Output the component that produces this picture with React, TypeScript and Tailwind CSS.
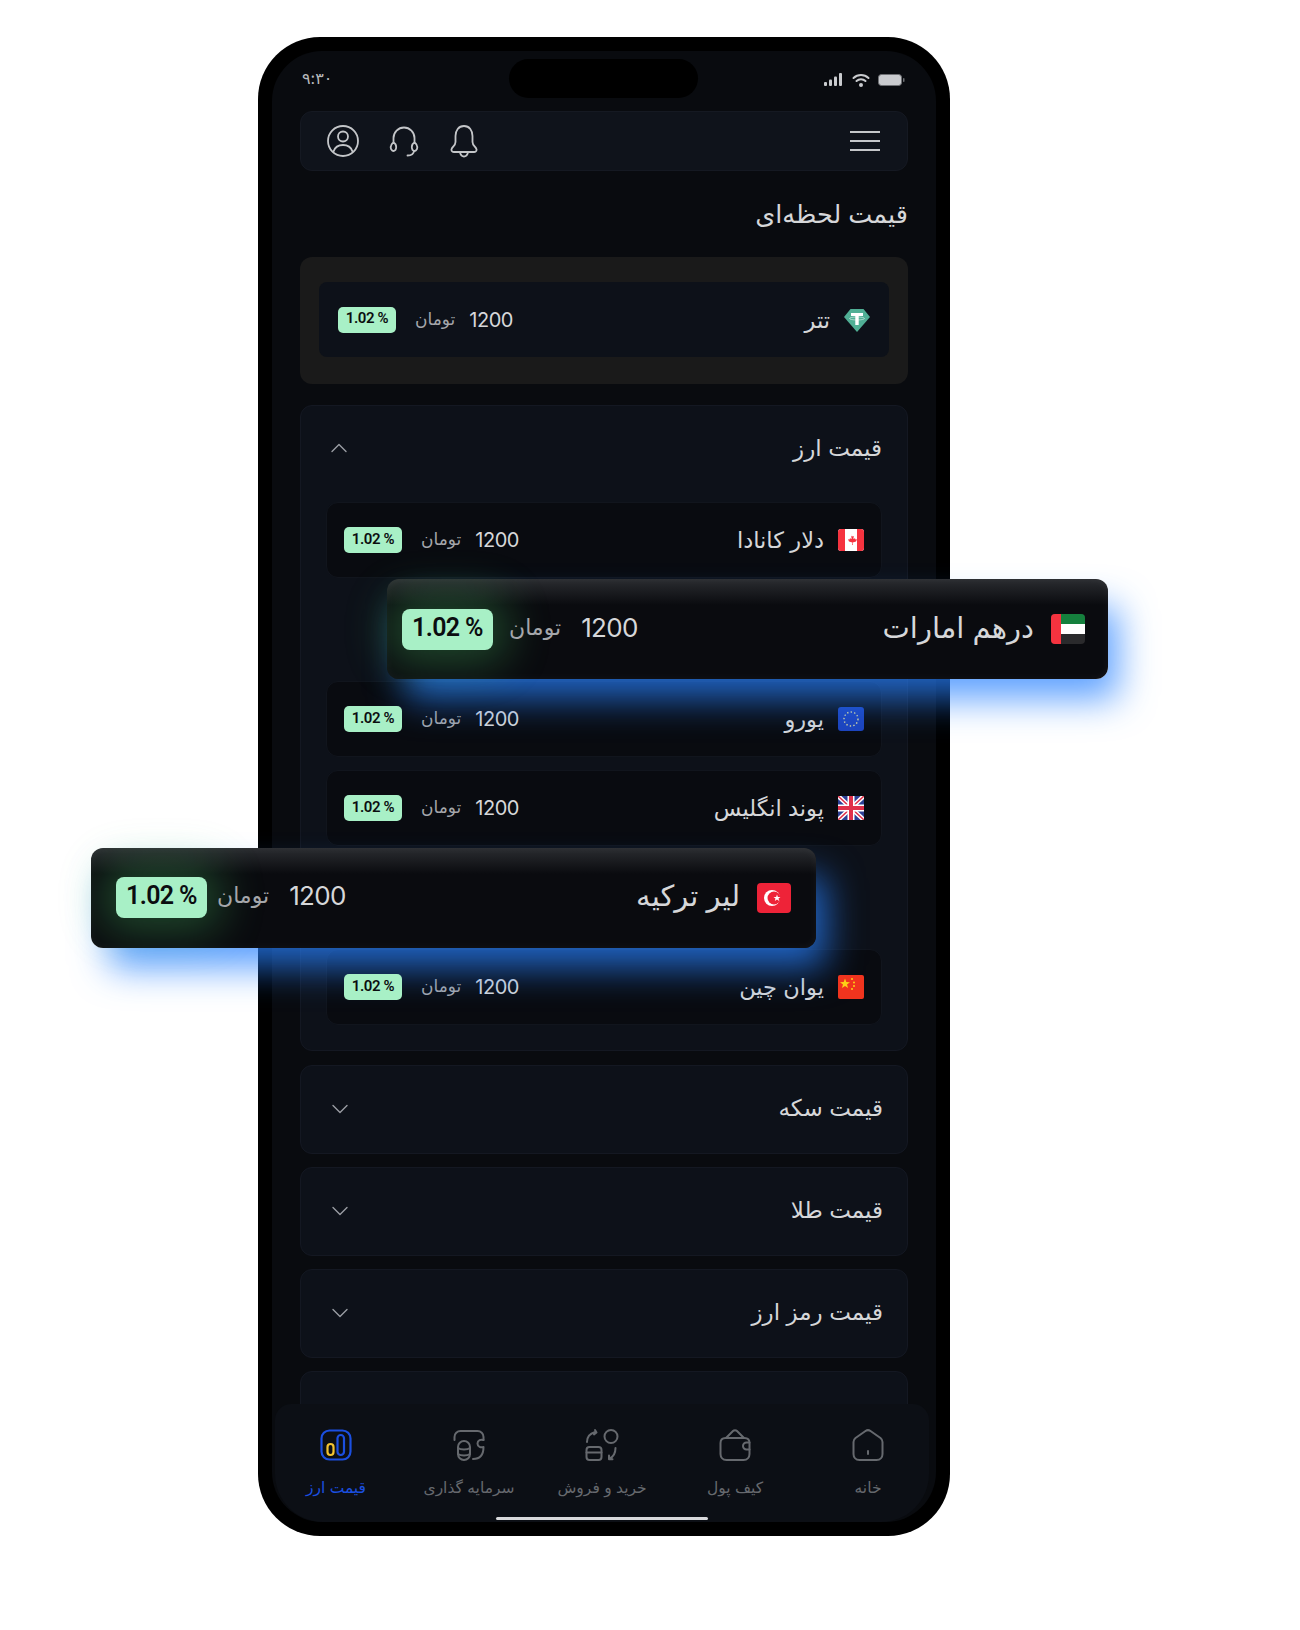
const font = { fontFamily: '"Inter", "Noto Sans", "DejaVu Sans", sans-serif' }

function Canada() {
  return (
    <svg viewBox="0 0 26 26" className="w-[26px] h-[26px]">
      <rect x="0" y="2" width="26" height="22" rx="3" fill="#fff" />
      <path d="M3 2h4v22H3a3 3 0 0 1-3-3V5a3 3 0 0 1 3-3zM19 2h4a3 3 0 0 1 3 3v16a3 3 0 0 1-3 3h-4z" fill="#f5333f" />
      <path d="M13 7l1.4 2.6 1.4-.6-.5 3 1.7-.8.5 1.2 1.5-.2-1 2.4-3.3.8.2 2.6h-.8l.2-2.6-3.3-.8-1-2.4 1.5.2.5-1.2 1.7.8-.5-3 1.4.6z" fill="#f5333f" />
    </svg>
  )
}

function Euro() {
  return (
    <svg viewBox="0 0 26 26" className="w-[26px] h-[26px]">
      <rect width="26" height="24" y="1" rx="3" fill="#1c43bd" />
      <circle cx="13" cy="13" r="7" fill="none" stroke="#d9d8a0" strokeWidth="1.4" strokeDasharray="1.4 2.2" />
    </svg>
  )
}

function Uk() {
  return (
    <svg viewBox="0 0 26 24" className="w-[26px] h-[24px]">
      <rect width="26" height="24" fill="#2c3f95" />
      <path d="M0 0l26 24M26 0L0 24" stroke="#fff" strokeWidth="4.5" />
      <path d="M0 0l26 24M26 0L0 24" stroke="#e0304a" strokeWidth="1.5" />
      <path d="M13 0v24M0 12h26" stroke="#fff" strokeWidth="7" />
      <path d="M13 0v24M0 12h26" stroke="#e0304a" strokeWidth="4" />
    </svg>
  )
}

function China() {
  return (
    <svg viewBox="0 0 26 24" className="relative z-30 w-[26px] h-[24px]">
      <rect width="26" height="24" rx="2" fill="#f0341e" />
      <path d="M7 3.5l1.3 3.6 3.7.1-3 2.3 1.1 3.600L7 11l-3.100 2.100L5 9.500 2 7.200l3.700-.1z" fill="#fcd116" />
      <circle cx="14" cy="4" r="1" fill="#fcd116" />
      <circle cx="16" cy="7.5" r="1" fill="#fcd116" />
      <circle cx="16" cy="11" r="1" fill="#fcd116" />
      <circle cx="14" cy="14" r="1" fill="#fcd116" />
    </svg>
  )
}

function Uae() {
  return (
    <svg viewBox="0 0 34 30" className="w-[34px] h-[30px]">
      <rect width="34" height="30" rx="4" fill="#2a2a2c" />
      <path d="M10 0h20a4 4 0 0 1 4 4v6H10z" fill="#15803d" />
      <rect x="10" y="10" width="24" height="10" fill="#fff" />
      <path d="M4 0h6v30H4a4 4 0 0 1-4-4V4a4 4 0 0 1 4-4z" fill="#f5333f" />
    </svg>
  )
}

function Turkey() {
  return (
    <svg viewBox="0 0 34 30" className="w-[34px] h-[30px]">
      <rect width="34" height="30" rx="4" fill="#ee2338" />
      <circle cx="15" cy="15" r="8" fill="#fff" />
      <circle cx="17" cy="15" r="6.5" fill="#ee2338" />
      <path d="M20 11.5l.9 2.5 2.6-.1-2 1.6.7 2.5-2.200-1.500-2.200 1.500.7-2.500-2-1.600 2.600.1z" fill="#fff" />
    </svg>
  )
}

function Tether() {
  return (
    <svg viewBox="0 0 26 26" className="w-[26px] h-[26px]">
      <path d="M6.5 2h13L26 10 13 25 0 10z" fill="#50af95" />
      <path d="M7 6h12v3h-4.300v9h-3.400V9H7z" fill="#fff" />
      <ellipse cx="13" cy="11.5" rx="7.5" ry="1.5" fill="none" stroke="#fff" strokeWidth="0.7" opacity="0.7" />
    </svg>
  )
}

function Chevron({ up }: { up?: boolean }) {
  return (
    <svg viewBox="0 0 18 10" className="w-[18px] h-[10px]" fill="none" stroke="#9a9da3" strokeWidth="1.4" strokeLinecap="round" strokeLinejoin="round">
      <path d={up ? "M2 8.5l7-7 7 7" : "M2 1.5l7 7 7-7"} />
    </svg>
  )
}

function Badge({ big }: { big?: boolean }) {
  if (big) {
    return (
      <div className="w-[91px] h-[41px] pb-[3px] rounded-lg bg-[#a8f0c6] text-[#0b0d10] font-['Roboto'] text-[25px] font-semibold tracking-tight flex items-center justify-center shadow-[0_0_44px_14px_rgba(80,210,110,0.3)]">
        1.02 %
      </div>
    )
  }
  return (
    <div className="relative z-30 w-[58px] h-[26px] pb-[2px] rounded-[5px] bg-[#a8f0c6] text-[#0b0d10] font-['Roboto'] text-[15px] font-semibold tracking-tight flex items-center justify-center">
      1.02 %
    </div>
  )
}

function Row({ name, flag }: { name: string; flag: React.ReactNode }) {
  return (
    <div className="h-[76px] rounded-xl bg-[#090b10] border border-[#11151d] px-[17px] flex items-center justify-between">
      <div className="flex items-center">
        <Badge />
        <span className="ml-[19px] text-[#a5a7ab] text-[17px]">تومان</span>
        <span className="ml-[14px] text-[#d6d7d9] text-[20px] tracking-tight">1200</span>
      </div>
      <div className="flex items-center gap-[14px]">
        <span className="text-[#d6d7d9] text-[22.5px]">{name}</span>
        {flag}
      </div>
    </div>
  )
}

function FloatRow({ name, flag, className, gap }: { name: string; flag: React.ReactNode; className: string; gap: string }) {
  return (
    <div className={"absolute z-20 h-[100px] rounded-xl flex items-center justify-between bg-[linear-gradient(180deg,#2a2c30_0px,#0a0b0f_26px)] shadow-[14px_24px_36px_-4px_rgba(40,130,255,0.75),inset_0_0_10px_rgba(255,255,255,0.05)] " + className}>
      <div className="flex items-center">
        <Badge big />
        <span className={"-mt-[4px] text-[#a5a7ab] text-[22px] " + gap}>تومان</span>
        <span className="-mt-[4px] ml-[20px] text-[#d6d7d9] text-[26px] tracking-tight">1200</span>
      </div>
      <div className="flex items-center gap-[17px]">
        <span className="-mt-[4px] text-[#d6d7d9] text-[29px]">{name}</span>
        {flag}
      </div>
    </div>
  )
}

function Accordion({ title }: { title: string }) {
  return (
    <div className="h-[89px] rounded-xl bg-[#0d1119] border border-[#141822] pl-[30px] pr-[24px] flex items-center justify-between">
      <Chevron />
      <span className="-mt-[2px] text-[#d6d7d9] text-[23px]">{title}</span>
    </div>
  )
}

function NavItem({ label, icon, active }: { label: string; icon: React.ReactNode; active?: boolean }) {
  return (
    <div className="w-[133px] shrink-0 flex flex-col items-center">
      <div className="h-[36px] flex items-center justify-center">{icon}</div>
      <span className={"mt-[15px] text-[15.5px] leading-[20px] " + (active ? "text-[#1b4fe0]" : "text-[#66696e]")}>{label}</span>
    </div>
  )
}

export default function App() {
  return (
    <div className="w-[1300px] h-[1630px] bg-white pt-[37px] pl-[258px]" style={font} dir="ltr">
      <div className="relative w-[692px] h-[1499px] rounded-[62px] bg-black p-[14px]">
        <div className="relative h-full rounded-[50px] bg-[#090b0f] px-[28px]">
          {/* status bar */}
          <div className="relative h-[60px] flex items-center justify-between pl-[2px] pr-[3px]">
            <span className="text-[#b8babd] text-[16px] tracking-wider -mt-[6px]">۹:۳۰</span>
            <div className="absolute left-[209px] top-[8px] w-[189px] h-[39px] rounded-[20px] bg-black" />
            <div className="flex items-center gap-[8px] -mt-[3px]">
              <svg viewBox="0 0 20 13" className="w-[20px] h-[13px]" fill="#c9cbce">
                <rect x="0" y="9" width="3" height="4" rx="1" />
                <rect x="5" y="6.5" width="3" height="6.5" rx="1" />
                <rect x="10" y="3.5" width="3" height="9.5" rx="1" />
                <rect x="15" y="0" width="3" height="13" rx="1" />
              </svg>
              <svg viewBox="0 0 18 14" className="w-[18px] h-[14px]" fill="none" stroke="#c9cbce" strokeWidth="2" strokeLinecap="round">
                <path d="M1.5 5a11 11 0 0 1 15 0" />
                <path d="M4.5 8a6.5 6.5 0 0 1 9 0" />
                <circle cx="9" cy="12" r="1" fill="#c9cbce" />
              </svg>
              <svg viewBox="0 0 27 12" className="w-[27px] h-[12px]">
                <rect x="0.5" y="0.5" width="23" height="11" rx="3" fill="#c9cbce" stroke="#6d6f73" />
                <rect x="25" y="4" width="1.5" height="4" rx="0.7" fill="#6d6f73" />
              </svg>
            </div>
          </div>

          {/* top bar */}
          <div className="h-[60px] rounded-xl bg-[#0f131b] border border-[#151922] pl-[26px] pr-[27px] flex items-center justify-between">
            <div className="flex items-center gap-[30px]">
              <svg viewBox="0 0 32 34" className="w-[32px] h-[34px]" fill="none" stroke="#c4c6c9" strokeWidth="1.8" strokeLinecap="round">
                <circle cx="16" cy="17" r="15" />
                <circle cx="16" cy="12.5" r="5" />
                <path d="M6.5 27.5c1.5-4.5 5-6.500 9.500-6.500s8 2 9.500 6.500" />
              </svg>
              <svg viewBox="0 0 30 32" className="w-[30px] h-[32px]" fill="none" stroke="#c4c6c9" strokeWidth="1.8" strokeLinecap="round">
                <path d="M4.5 18V13a10.5 10.5 0 0 1 21 0v5" />
                <path d="M4.5 17.5c2 1 3 3.5 2.5 6-.4 2.400-2.500 3-3.800 2-1.500-1.300-1.700-3.600-1-5.200.5-1.300 1.300-2.300 2.300-2.800z" />
                <path d="M25.5 17.5c-2 1-3 3.5-2.5 6 .4 2.400 2.500 3 3.800 2 1.500-1.300 1.700-3.600 1-5.200-.5-1.300-1.300-2.300-2.300-2.800z" />
                <path d="M25 26c-.3 3-2.500 4.500-6.500 4.500" />
              </svg>
              <svg viewBox="0 0 30 34" className="w-[30px] h-[34px]" fill="none" stroke="#c4c6c9" strokeWidth="1.8" strokeLinejoin="round" strokeLinecap="round">
                <path d="M15 2c-5.5 0-8.500 4.500-8.500 10v6c0 3-2.500 4.500-3.700 6.500-1 1.700 0 3.500 2 3.500h20.400c2 0 3-1.800 2-3.500-1.200-2-3.700-3.500-3.700-6.500v-6c0-5.500-3-10-8.500-10zM11 28.500c.7 2.500 2 4 4 4s3.300-1.500 4-4" />
              </svg>
            </div>
            <div className="w-[30px] flex flex-col gap-[7px]">
              <div className="h-[2px] bg-[#c4c6c9]" />
              <div className="h-[2px] bg-[#c4c6c9]" />
              <div className="h-[2px] bg-[#c4c6c9]" />
            </div>
          </div>

          {/* title */}
          <h1 className="h-[86px] flex items-center justify-end text-[#d6d7d9] text-[25.5px] font-normal" dir="rtl">
            <span className="w-full">قیمت لحظه‌ای</span>
          </h1>

          {/* tether */}
          <div className="rounded-xl bg-[#1a1a1a] px-[19px] pt-[25px] pb-[27px]">
            <div className="h-[75px] rounded-lg bg-[#0d1119] px-[19px] flex items-center justify-between">
              <div className="flex items-center">
                <Badge />
                <span className="ml-[19px] text-[#a5a7ab] text-[17px]">تومان</span>
                <span className="ml-[14px] text-[#d6d7d9] text-[20px] tracking-tight">1200</span>
              </div>
              <div className="flex items-center gap-[14px]">
                <span className="text-[#d6d7d9] text-[22.5px]">تتر</span>
                <Tether />
              </div>
            </div>
          </div>

          {/* currency accordion */}
          <div className="mt-[21px] rounded-xl bg-[#0d1119] border border-[#141822] px-[25px] pb-[25px]">
            <div className="h-[84px] mb-[12px] pl-[4px] flex items-center justify-between">
              <Chevron up />
              <span className="text-[#d6d7d9] text-[23px]">قیمت ارز</span>
            </div>
            <div className="flex flex-col gap-[13.4px]">
              <Row name="دلار کانادا" flag={<Canada />} />
              <div className="relative h-[76px]">
                <FloatRow name="درهم امارات" flag={<Uae />} gap="ml-[16px]" className="left-[61px] top-[-12px] w-[721px] pl-[15px] pr-[23px]" />
              </div>
              <Row name="یورو" flag={<Euro />} />
              <Row name="پوند انگلیس" flag={<Uk />} />
              <div className="relative h-[76px]">
                <FloatRow name="لیر ترکیه" flag={<Turkey />} gap="ml-[10px]" className="left-[-235px] top-[-12px] w-[725px] px-[25px]" />
              </div>
              <Row name="یوان چین" flag={<China />} />
            </div>
          </div>

          <div className="mt-[14px] flex flex-col gap-[13px]">
            <Accordion title="قیمت سکه" />
            <Accordion title="قیمت طلا" />
            <Accordion title="قیمت رمز ارز" />
            <div className="h-[40px] rounded-t-xl bg-[#0d1119] border border-[#141822]" />
          </div>

          {/* bottom nav */}
          <div className="absolute z-10 left-[3px] right-[7px] bottom-0 h-[118px] pt-[23px] rounded-t-2xl rounded-b-[48px] bg-[#0c0f15] flex">
            <div className="flex -ml-[5.5px]">
              <NavItem
                label="قیمت ارز"
                active
                icon={
                  <svg viewBox="0 0 32 32" className="w-[32px] h-[32px]" fill="none" strokeWidth="2.2">
                    <rect x="1.5" y="1.5" width="29" height="29" rx="8" stroke="#1b4fe0" />
                    <rect x="7.5" y="15" width="6" height="11" rx="3" stroke="#f2c230" />
                    <rect x="17.5" y="6" width="6.5" height="20" rx="3.2" stroke="#1b4fe0" />
                  </svg>
                }
              />
              <NavItem
                label="سرمایه گذاری"
                icon={
                  <svg viewBox="0 0 34 34" className="w-[34px] h-[34px]" fill="none" stroke="#66696e" strokeWidth="2" strokeLinecap="round">
                    <path d="M2.5 12V9a6 6 0 0 1 6-6h17a6 6 0 0 1 6 6v3" />
                    <path d="M31.5 12c-2.500-.8-6 0-6 3.500s3.500 4.300 6 3.500M31.500 19c0 7-3 12-10.500 12" />
                    <rect x="6" y="13" width="12" height="19" rx="6" />
                    <path d="M6 20c2.500 2 9.500 2 12 0M6 26c2.500 2 9.500 2 12 0" />
                  </svg>
                }
              />
              <NavItem
                label="خرید و فروش"
                icon={
                  <svg viewBox="0 0 34 34" className="w-[34px] h-[34px]" fill="none" stroke="#66696e" strokeWidth="2" strokeLinecap="round" strokeLinejoin="round">
                    <circle cx="26" cy="8.5" r="6.5" />
                    <rect x="1.5" y="19" width="15" height="13" rx="3" />
                    <path d="M1.5 24.5h15M2 14c0-5 3-8.500 8-10M10 2l1.500 2.500L9 6.500M30.500 20c0 5-2 9-6.500 11M24 27.500v3.800h3.500" />
                  </svg>
                }
              />
              <NavItem
                label="کیف پول"
                icon={
                  <svg viewBox="0 0 34 34" className="w-[34px] h-[34px]" fill="none" stroke="#66696e" strokeWidth="2" strokeLinecap="round" strokeLinejoin="round">
                    <path d="M2.5 15c0-3 2-5 5-5h19c3 0 5 2 5 5v11c0 3-2 6-6 6H8.500c-4 0-6-3-6-6zM8 10l7-7c1-1 3-1 4 0l7 7" />
                    <path d="M31.5 14.5h-3a3.500 3.500 0 0 0 0 7h3" />
                  </svg>
                }
              />
              <NavItem
                label="خانه"
                icon={
                  <svg viewBox="0 0 34 34" className="w-[34px] h-[34px]" fill="none" stroke="#66696e" strokeWidth="2" strokeLinecap="round" strokeLinejoin="round">
                    <path d="M2.5 14c0-2 .7-3 2-4l10-7c1.700-1.200 3.300-1.200 5 0l10 7c1.300 1 2 2 2 4v12c0 3-2 6-6 6h-17c-4 0-6-3-6-6zM17 23v3" />
                  </svg>
                }
              />
            </div>
          </div>
          <div className="absolute z-10 left-[224px] bottom-[2px] w-[212px] h-[3px] rounded-full bg-[#d8d9db]" />
        </div>
      </div>
    </div>
  )
}
